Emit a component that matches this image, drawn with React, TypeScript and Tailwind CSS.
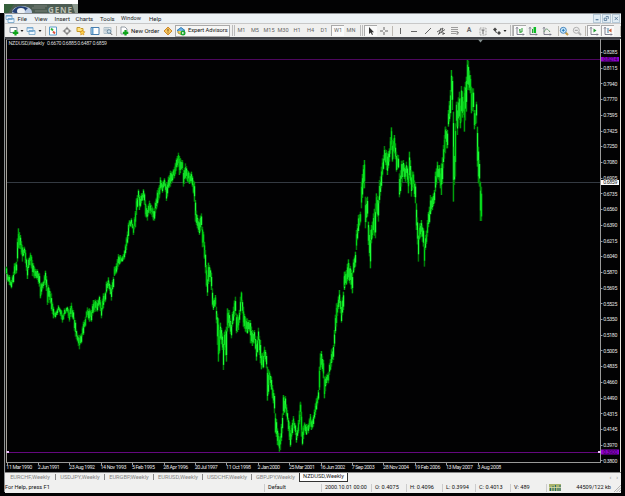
import type { ReactNode } from "react";

type Point = [number, number, number];
type Segment = { x: number; y: number; points: Point[] };

// Price ranges (position, high, low) in thirds of a pixel from each segment's origin.
const segments: Segment[] = [
  {
    x: 0,
    y: 150,
    points: [
      [19, 350, 372], [22, 370, 395], [27, 375, 405], [32, 390, 415], [38, 365, 400], [43, 340, 375], [48, 335, 370],
      [52, 265, 335], [55, 235, 295], [60, 255, 297], [66, 285, 335], [72, 290, 312], [76, 300, 340], [80, 345, 387],
      [85, 325, 360], [91, 308, 345], [97, 330, 378], [103, 350, 385], [110, 358, 390], [116, 370, 410], [121, 400, 445],
      [128, 392, 415], [133, 375, 405], [136, 362, 405], [142, 400, 465], [148, 415, 450], [153, 430, 482], [158, 470, 505],
      [164, 485, 505], [170, 475, 495], [175, 465, 482], [182, 480, 508], [187, 492, 518], [193, 475, 498], [200, 470, 488],
      [206, 480, 515], [212, 458, 500], [218, 480, 510], [224, 510, 560], [230, 550, 575], [236, 555, 598], [242, 550, 580],
      [248, 515, 555], [254, 500, 530], [260, 472, 500], [266, 475, 515], [272, 480, 515], [278, 450, 490], [284, 448, 485],
      [290, 450, 485], [298, 437, 470], [303, 465, 505], [308, 430, 475], [314, 425, 455], [319, 395, 430], [323, 382, 415],
      [328, 395, 422], [332, 405, 452], [338, 380, 415], [343, 350, 378], [348, 340, 370], [354, 312, 350], [360, 315, 340],
      [366, 318, 335], [372, 300, 328], [378, 262, 300], [384, 218, 268], [388, 210, 235], [394, 205, 230], [399, 225, 255],
      [404, 183, 232], [409, 145, 195], [413, 118, 150], [418, 135, 180], [424, 130, 160], [430, 117, 150], [436, 150, 200],
      [440, 175, 212], [447, 152, 190], [453, 165, 195], [460, 180, 212], [466, 155, 190], [472, 125, 160], [476, 108, 140],
    ],
  },
  {
    x: 150,
    y: 140,
    points: [
      [0, 190, 215], [5, 200, 230], [11, 205, 242], [16, 185, 215], [21, 150, 195], [26, 135, 175], [31, 112, 150],
      [36, 125, 158], [42, 115, 140], [49, 130, 183], [55, 110, 145], [60, 92, 140],
      [66, 95, 125], [72, 80, 115], [78, 55, 92], [83, 38, 80], [88, 48, 105], [95, 60, 90], [100, 90, 140], [106, 70, 118],
      [112, 90, 125], [118, 98, 132], [122, 95, 130], [127, 108, 140], [131, 125, 185], [135, 180, 245], [140, 225, 265],
      [146, 238, 285], [152, 220, 270], [156, 260, 322], [160, 275, 320], [164, 330, 400], [167, 375, 440], [170, 405, 468],
      [175, 368, 432], [180, 385, 425], [184, 398, 450], [187, 445, 500], [190, 475, 510], [194, 465, 500], [198, 500, 550],
      [203, 535, 665], [206, 570, 640], [211, 548, 600], [215, 580, 630], [219, 600, 690], [223, 575, 630], [227, 560, 665],
      [230, 505, 575], [236, 510, 565], [242, 545, 595], [248, 500, 550], [254, 470, 525], [259, 520, 580], [265, 530, 570],
      [270, 470, 525], [274, 455, 490], [278, 500, 560], [284, 530, 575], [290, 535, 582], [296, 540, 575], [300, 540, 610],
      [306, 570, 618], [312, 570, 610], [319, 600, 662], [324, 563, 610], [329, 600, 670], [334, 640, 688], [339, 635, 685],
      [343, 620, 660], [348, 640, 685], [352, 680, 782], [357, 692, 735], [362, 710, 750], [367, 735, 775], [372, 760, 820],
      [376, 820, 880], [382, 865, 915], [387, 890, 935], [391, 880, 930], [395, 820, 880], [400, 765, 825], [405, 768, 815],
      [411, 810, 845], [416, 845, 900], [420, 870, 920], [425, 840, 885], [429, 828, 865], [434, 850, 885], [439, 870, 908],
      [444, 840, 880], [449, 785, 840],
    ],
  },
  {
    x: 270,
    y: 280,
    points: [
      [90, 368, 405], [94, 395, 470], [97, 440, 496], [102, 427, 455], [108, 432, 465], [114, 430, 460], [119, 402, 440],
      [124, 420, 450], [129, 405, 440], [134, 370, 405], [139, 355, 390], [144, 330, 360], [148, 260, 330], [151, 220, 270],
      [154, 213, 262], [158, 240, 295], [163, 290, 355], [168, 283, 315], [173, 275, 310], [178, 250, 285], [183, 208, 260],
      [188, 195, 240], [192, 150, 200], [197, 70, 140], [201, 68, 108], [206, 30, 80], [210, 58, 100], [214, 65, 128],
      [218, 35, 90], [222, -10, 30],
    ],
  },
  {
    x: 330,
    y: 100,
    points: [
      [42, 515, 560], [47, 510, 555], [53, 478, 540], [58, 490, 550], [65, 515, 580], [70, 478, 520], [75, 455, 500],
      [79, 390, 450], [83, 345, 400], [89, 335, 370], [94, 245, 325], [98, 195, 265], [101, 180, 265], [106, 290, 385],
      [110, 290, 350], [115, 365, 435], [119, 390, 505], [124, 375, 430], [129, 340, 400], [134, 310, 415], [139, 280, 340],
      [143, 290, 365], [148, 240, 310], [153, 200, 265], [157, 175, 230], [162, 138, 185], [167, 150, 210], [171, 160, 225],
      [177, 145, 185], [182, 82, 150], [187, 120, 185], [193, 105, 160], [198, 155, 215], [203, 165, 205], [208, 220, 292],
      [214, 182, 260], [219, 180, 230], [225, 200, 245], [229, 185, 230], [234, 220, 280], [238, 155, 235], [243, 210, 290],
      [248, 215, 265], [254, 250, 310], [259, 310, 390], [263, 390, 485], [268, 370, 420], [273, 360, 410], [278, 385, 440],
      [282, 425, 500], [286, 405, 450], [291, 360, 410], [296, 320, 370], [301, 285, 345], [306, 290, 330], [311, 270, 310],
      [316, 215, 275], [321, 185, 235], [326, 195, 245], [331, 205, 265], [334, 190, 285], [339, 135, 205], [344, 80, 160],
      [349, 95, 145],
    ],
  },
  {
    x: 420,
    y: 40,
    points: [
      [74, 260, 315], [80, 270, 325], [85, 210, 260], [89, 150, 230], [93, 90, 180], [95, 110, 210], [98, 215, 485],
      [102, 320, 435], [105, 250, 410], [108, 185, 260], [112, 185, 285], [116, 155, 240], [120, 175, 265], [124, 138, 245],
      [129, 170, 225], [133, 140, 275], [137, 110, 215], [141, 60, 150], [144, 62, 150], [149, 105, 160], [154, 140, 220],
      [158, 145, 215], [163, 210, 268], [167, 205, 250], [169, 185, 250], [172, 260, 380], [175, 320, 430], [178, 360, 440],
      [181, 425, 543], [182, 440, 543],
    ],
  },
];

const noise = (n: number) => {
  const v = Math.sin(n * 91.7) * 4375.5;
  return v - Math.floor(v);
};

function priceBars() {
  const bars: ReactNode[] = [];
  segments.forEach((s, si) => {
    const first = Math.round(s.points[0][0] / 3);
    const last = Math.round(s.points[s.points.length - 1][0] / 3);
    for (let c = first; c <= last; c++) {
      const near = s.points.filter((p) => Math.round(p[0] / 3) === c);
      let hi: number;
      let lo: number;
      if (near.length) {
        hi = Math.min(...near.map((p) => p[1]));
        lo = Math.max(...near.map((p) => p[2]));
      } else {
        const i = Math.max(1, s.points.findIndex((p) => p[0] > c * 3));
        const a = s.points[i - 1];
        const b = s.points[i];
        const t = (c * 3 - a[0]) / (b[0] - a[0]);
        hi = a[1] + (b[1] - a[1]) * t + noise(c + s.x) * 5;
        lo = a[2] + (b[2] - a[2]) * t - noise(c * 2 + s.x) * 5;
      }
      const x = s.x + c;
      const top = s.y + hi / 3;
      const h = Math.max(4, (lo - hi) / 3);
      const bodyTop = top + h * (0.12 + 0.16 * noise(x));
      const bodyH = h * (0.5 + 0.2 * noise(x * 3));
      bars.push(
        <g key={si + "-" + c}>
          <rect x={x - 0.3} y={top} width="1.5" height={h} fill={noise(x * 5) > 0.5 ? "#007a08" : "#00a00c"} />
          <rect x={x - 0.1} y={bodyTop} width="1.3" height={bodyH} fill={noise(x * 7) > 0.3 ? "#1cff36" : "#00d816"} />
        </g>,
      );
    }
  });
  return bars;
}

const prices = [
  "0.8285", "0.8115", "0.7940", "0.7770", "0.7595", "0.7425", "0.7250", "0.7080", "0.6905", "0.6735", "0.6560", "0.6390",
  "0.6215", "0.6040", "0.5870", "0.5695", "0.5525", "0.5350", "0.5180", "0.5005", "0.4835", "0.4660", "0.4490", "0.4315",
  "0.4145", "0.3970", "0.3800",
];
const dates: [string, number][] = [
  ["11 Mar 1990", 26], ["2 Jun 1991", 22], ["23 Aug 1992", 26], ["14 Nov 1993", 26], ["5 Feb 1995", 23],
  ["28 Apr 1996", 25], ["20 Jul 1997", 23], ["11 Oct 1998", 25], ["2 Jan 2000", 22.5], ["25 Mar 2001", 26],
  ["16 Jun 2002", 25], ["7 Sep 2003", 23], ["28 Nov 2004", 26], ["19 Feb 2006", 26], ["13 May 2007", 27],
  ["3 Aug 2008", 24],
];

function Chart() {
  return (
    <svg
      viewBox="5 39 616 433"
      className="block h-[433px] w-[616px] shrink-0 bg-[#020203] font-[Roboto,sans-serif]"
    >
      <rect x="5" y="39" width="1" height="433" fill="#111" />
      <rect x="6" y="39" width="1" height="424" fill="#a6a29b" />
      <rect x="6" y="39" width="614" height="1" fill="#55565b" />
      <rect x="620" y="39" width="1" height="433" fill="#e8e8e0" />
      <rect x="7" y="59" width="594" height="1" fill="#4d075e" />
      <rect x="7" y="182" width="594" height="1" fill="#343a42" />
      <rect x="7" y="452" width="594" height="1" fill="#65087f" />
      <g>{priceBars()}</g>
      <rect x="600" y="39" width="1" height="424" fill="#999" />
      <rect x="7" y="462" width="594" height="1" fill="#999" />
      <path d="M478 39.5h5l-2.5 3z" fill="#85908f" />
      <text x="8.500" y="45" textLength="36" fill="#d8d8d8" fontSize="5.300">NZDUSD,Weekly</text>
      <text x="47" y="45" textLength="60" fill="#d8d8d8" fontSize="5.300">0.6670 0.6885 0.6487 0.6859</text>
      {prices.map((p, i) => (
        <g key={p}>
          <rect x="601" y={Math.round(52 + i * 15.71)} width="1.5" height="1" fill="#999" />
          <text x="603.3" y={54.2 + i * 15.71} textLength="14" fill="#e4e4e4" fontSize="5.200">
            {p}
          </text>
        </g>
      ))}
      {dates.map(([d, w], i) => (
        <g key={d}>
          <rect x={Math.round(6.5 + i * 31.4)} y="463" width="1" height="2" fill="#999" />
          <text x={6.3 + i * 31.4} y="468.6" textLength={w} fill="#e4e4e4" fontSize="5.300">
            {d}
          </text>
        </g>
      ))}
      <rect x="601" y="57" width="18" height="4.5" fill="#9000ce" />
      <text x="603.3" y="61.2" textLength="14" fill="#2a0040" fontSize="5.200">0.8214</text>
      <rect x="601" y="180" width="18" height="5" fill="#fff" />
      <text x="603.3" y="184.4" textLength="14" fill="#111" fontSize="5.200">0.6859</text>
      <rect x="601" y="449.5" width="18" height="5" fill="#9000ce" />
      <text x="603.3" y="454" textLength="14" fill="#2a0040" fontSize="5.200">0.3900</text>
      <rect x="6.5" y="451" width="2.5" height="2" fill="#efc5ff" />
      <rect x="598" y="451" width="2.5" height="2" fill="#efc5ff" />
    </svg>
  );
}

function Cell({ w, on, children }: { w: string; on?: boolean; children?: ReactNode }) {
  return (
    <div
      className={
        "flex h-[11px] shrink-0 items-center justify-center " +
        w +
        (on ? " border-t border-l border-[#aaa] bg-[#fafafa]" : "")
      }
    >
      {children}
    </div>
  );
}

const Svg = ({ children }: { children: ReactNode }) => (
  <svg viewBox="0 0 10 10" className="h-[10px] w-[10px] shrink-0" fill="none" stroke="#666" strokeWidth="1">
    {children}
  </svg>
);
const Caret = () => (
  <svg viewBox="0 0 4 4" className="h-1 w-1 shrink-0">
    <path d="M.5 1h3l-1.5 2z" fill="#222" />
  </svg>
);
const Sep = () => <div className="h-[10px] w-px shrink-0 bg-[#bdb9b2]" />;
const Grip = () => <div className="h-[11px] w-[3px] shrink-0 border-x border-[#bbb]" />;
const Plus = () => <path d="M6.5 4v5.5M3.8 6.8h5.5" stroke="#0fa51b" strokeWidth="2.2" />;
const Axes = () => <path d="M2 1v7.5h7M1 2.5l1-1 1 1M8 7.5l1 1-1 1" stroke="#667" strokeWidth=".8" />;

const Windows = () => (
  <Svg>
    <path d="M1 1.500h6v4H1zM3 4.500h6v4H3z" fill="#eef7ff" stroke="#6c9fc4" strokeWidth=".8" />
    <path d="M1 2h6M3 5h6" stroke="#6aa3d0" />
  </Svg>
);

function Toolbar() {
  return (
    <div className="flex h-[14px] shrink-0 items-center overflow-hidden border-t border-[#c8c8c8] bg-[#f0f0ef] pl-[3px] text-[5.600px] text-[#666]">
      <Cell w="w-[11px]">
        <Svg>
          <path d="M1 1.5h7v5H1z" fill="#fff" stroke="#789" />
          <Plus />
        </Svg>
      </Cell>
      <Cell w="w-[5px]"><Caret /></Cell>
      <Cell w="w-[14px]"><Windows /></Cell>
      <Cell w="w-[4px]"><Caret /></Cell>
      <div className="w-[3px] shrink-0" />
      <Sep />
      <Cell w="w-[14px]">
        <Svg>
          <path d="M1.5 1h7v8h-7z" fill="#fff" stroke="#5d9cc9" />
          <path d="M3 2.5l2 2" stroke="#2db33b" strokeWidth="1.8" />
          <path d="M5 5.5l2 2" stroke="#dc4f3b" strokeWidth="1.8" />
        </Svg>
      </Cell>
      <Cell w="w-[14px]">
        <Svg>
          <circle cx="5" cy="5" r="2.5" stroke="#777" />
          <path d="M5 .8v3M5 6.2v3M.8 5h3M6.2 5h3" stroke="#777" />
        </Svg>
      </Cell>
      <Cell w="w-[14px]">
        <Svg>
          <path d="M1 1.5h3l1 1h2v3H1z" fill="#ffe17c" stroke="#c69b2b" />
          <path d="M6.3 4l.8 1.6 1.8.2-1.3 1.3.3 1.8-1.6-.9-1.6.9.3-1.8L3.700 5.800l1.800-.2z" fill="#ffd44a" stroke="#d28d18" strokeWidth=".7" />
        </Svg>
      </Cell>
      <Cell w="w-[13px]">
        <Svg>
          <path d="M1 1.500h8v7H1z" fill="#fff" stroke="#477fb0" />
          <path d="M2.500 2v6" stroke="#65a1cf" strokeWidth="2" />
        </Svg>
      </Cell>
      <Cell w="w-[14px]">
        <Svg>
          <path d="M1 1.500h7v6H1zM3 1.500v6M5 1.500v6M1 4h7" stroke="#9ab0bf" strokeWidth=".7" />
          <circle cx="6" cy="5.500" r="1.800" fill="#cfe1ec" stroke="#6989a0" />
          <path d="M7.300 7l2 2" />
        </Svg>
      </Cell>
      <div className="w-[1px] shrink-0" />
      <Sep />
      <Cell w="w-[14px]">
        <Svg>
          <path d="M2 1h4l2 2v5H2z" fill="#fff" stroke="#7b8790" strokeWidth=".8" />
          <Plus />
        </Svg>
      </Cell>
      <span className="w-[31px] shrink-0 whitespace-nowrap text-[6px] text-[#111]">New Order</span>
      <Cell w="w-[12px]">
        <Svg>
          <path d="M5 1l4 4-4 4-4-4z" fill="#f6c65b" stroke="#d18a2b" />
          <path d="M5 2.800v2.700M5 6.500v.8" stroke="#7e4d16" />
        </Svg>
      </Cell>
      <div className="ml-[1px] flex h-[12px] w-[55px] shrink-0 items-center border border-[#aaa] bg-[#f7f7f6]">
        <Svg>
          <path d="M1 4.500l4-3 4 3-4 2z" fill="#68b1e5" stroke="#2d7ab4" />
          <path d="M2 5v2l3 1.500L8 7V5" fill="#f4d15d" stroke="#a99843" />
          <circle cx="7" cy="7" r="2.500" fill="#16a72c" stroke="none" />
          <path d="M6.200 5.700v2.600L8.300 7z" fill="#fff" stroke="none" />
        </Svg>
        <span className="ml-[2px] whitespace-nowrap text-[5.700px] text-[#111]">Expert Advisors</span>
      </div>
      <div className="w-[2px] shrink-0" />
      <Grip />
      <Cell w="w-[13px]">M1</Cell>
      <Cell w="w-[14px]">M5</Cell>
      <Cell w="w-[14px]">M15</Cell>
      <Cell w="w-[14px]">M30</Cell>
      <Cell w="w-[14px]">H1</Cell>
      <Cell w="w-[13px]">H4</Cell>
      <Cell w="w-[14px]">D1</Cell>
      <Cell w="w-[13px]" on>W1</Cell>
      <Cell w="w-[14px]">MN</Cell>
      <div className="w-[2px] shrink-0" />
      <Grip />
      <div className="w-px shrink-0" />
      <Cell w="w-[13px]" on>
        <Svg>
          <path d="M3 1v7l1.700-1.500L6 9l1-.5-1.200-2.300H8z" fill="#333" stroke="none" />
        </Svg>
      </Cell>
      <Cell w="w-[14px]">
        <Svg><path d="M5 1v3M5 6v3M1 5h3M6 5h3" /></Svg>
      </Cell>
      <div className="w-px shrink-0" />
      <Sep />
      <Cell w="w-[14px]"><Svg><path d="M5.500 2v6" /></Svg></Cell>
      <Cell w="w-[14px]"><Svg><path d="M2 5.500h6" /></Svg></Cell>
      <Cell w="w-[13px]"><Svg><path d="M2 8l6-6" /></Svg></Cell>
      <Cell w="w-[14px]">
        <Svg><path d="M1 6l6-4M2 8.500l7-5M3 8l2-6M5.500 7L7 2M7 7.500h2M7 6v3" stroke="#555" strokeWidth=".9" /></Svg>
      </Cell>
      <Cell w="w-[14px]">
        <Svg><path d="M1 1.500h7M1 3.500h7M1 5.500h7M1 7.500h5M7 9V6.500h2M7 7.700h1.500" stroke="#777" strokeWidth=".7" /></Svg>
      </Cell>
      <Cell w="w-[14px]"><span className="text-[7px] font-bold">A</span></Cell>
      <Cell w="w-[14px]">
        <Svg>
          <path d="M2 2h6v7H2z" stroke="#888" strokeWidth=".7" strokeDasharray="1 .5" />
          <path d="M3.500 4h3M5 4v4" />
        </Svg>
      </Cell>
      <Cell w="w-[13px]">
        <Svg>
          <path d="M1 3.500l2-2 2 2-2 2zM5 7l2-2 2 2-2 2z" fill="#444" stroke="none" />
          <path d="M3 4l1.500 3" stroke="#444" />
        </Svg>
      </Cell>
      <Cell w="w-[4px]"><Caret /></Cell>
      <div className="w-[3px] shrink-0" />
      <Grip />
      <Cell w="w-[13px]" on>
        <Svg><Axes /><path d="M5 3v4M5 4H4M5 6h2M7 2v4" stroke="#239b2d" /></Svg>
      </Cell>
      <Cell w="w-[14px]">
        <Svg><Axes /><path d="M4.500 3v4" stroke="#27a434" /><path d="M6.800 1v6" stroke="#0cbd25" strokeWidth="2.500" /></Svg>
      </Cell>
      <Cell w="w-[13px]">
        <Svg><Axes /><path d="M2 6c2-4 3-4 6 0" stroke="#6d9d73" /></Svg>
      </Cell>
      <div className="w-[5px] shrink-0" />
      <Sep />
      <Cell w="w-[10px]">
        <Svg>
          <path d="M6.500 6.500L9 9" stroke="#c59b49" strokeWidth="2" />
          <circle cx="4.300" cy="4.300" r="3" fill="#d5efff" stroke="#4586bd" />
          <path d="M2.800 4.300h3M4.300 2.800v3" stroke="#2378ba" />
        </Svg>
      </Cell>
      <Cell w="w-[16px]">
        <Svg>
          <path d="M6.500 6.500L9 9" stroke="#b5b5b5" strokeWidth="2" />
          <circle cx="4.300" cy="4.300" r="3" fill="#eee" stroke="#b0b0b0" />
          <path d="M2.800 4.300h3" stroke="#999" />
        </Svg>
      </Cell>
      <Sep />
      <div className="w-px shrink-0" />
      <Cell w="w-[13px]" on>
        <Svg><Axes /><path d="M4.500 2.500v4l3-2z" fill="#209c31" stroke="none" /></Svg>
      </Cell>
      <div className="w-px shrink-0" />
      <Cell w="w-[13px]" on>
        <Svg><Axes /><path d="M5 2v5" stroke="#4281a3" /><path d="M8.500 2.500v4l-3-2z" fill="#cc5a32" stroke="none" /></Svg>
      </Cell>
      <div className="ml-auto" />
      <Sep />
    </div>
  );
}

function MenuBar() {
  return (
    <div className="flex h-[9px] shrink-0 items-center bg-[#edf2f5] text-[6px] text-[#222]">
      <div className="w-[12.500px] shrink-0"><Windows /></div>
      <span className="w-[17px] shrink-0">File</span>
      <span className="w-[20px] shrink-0">View</span>
      <span className="w-[21px] shrink-0">Insert</span>
      <span className="w-[24.500px] shrink-0">Charts</span>
      <span className="w-[21px] shrink-0">Tools</span>
      <span className="w-[28px] shrink-0 text-[5.600px]">Window</span>
      <span>Help</span>
      <div className="ml-auto flex gap-px pr-px text-[#4d7191]">
        <div className="h-[9px] w-[8.500px] border border-[#b6c9d7] bg-[#e1edf5]">
          <svg viewBox="0 0 8 8" className="h-full w-full"><path d="M2 5.500h3.500" stroke="currentColor" strokeWidth="1.400" /></svg>
        </div>
        <div className="h-[9px] w-[8.500px] border border-[#b6c9d7] bg-[#e1edf5]">
          <svg viewBox="0 0 8 8" className="h-full w-full" fill="none"><path d="M3.500 1.500h3v3M1.500 3.500h3v3h-3z" stroke="currentColor" /></svg>
        </div>
        <div className="h-[9px] w-[8.500px] border border-[#b6c9d7] bg-[#e1edf5]">
          <svg viewBox="0 0 8 8" className="h-full w-full"><path d="M2 2l4 4M6 2L2 6" stroke="currentColor" /></svg>
        </div>
      </div>
    </div>
  );
}

function Tabs() {
  const cell = "flex h-[9px] shrink-0 items-center justify-center";
  const bar = "mt-px h-[6px] w-px shrink-0 bg-[#888]";
  return (
    <div className="flex h-[10px] shrink-0 items-start border-t border-[#888] bg-[#f0f0ef] text-[5.700px] text-[#858585]">
      <div className={cell + " w-[50px]"}>EURCHF,Weekly</div>
      <div className={bar} />
      <div className={cell + " w-[48px]"}>USDJPY,Weekly</div>
      <div className={bar} />
      <div className={cell + " w-[48px]"}>EURGBP,Weekly</div>
      <div className={bar} />
      <div className={cell + " w-[48px]"}>EURUSD,Weekly</div>
      <div className={bar} />
      <div className={cell + " w-[48px]"}>USDCHF,Weekly</div>
      <div className={bar} />
      <div className={cell + " w-[47px]"}>GBPJPY,Weekly</div>
      <div className={cell + " w-[49px] border-x border-b border-[#333] bg-white text-[#222]"}>NZDUSD,Weekly</div>
      <div className="ml-auto flex gap-[5px] pr-[3px] text-[6px] leading-[8px]">
        <span>‹</span>
        <span>›</span>
      </div>
    </div>
  );
}

function StatusBar() {
  const cell = "flex h-[8px] shrink-0 items-center border-l border-[#ccc] pl-[3px]";
  return (
    <div className="flex h-[11px] shrink-0 items-center bg-[#f0f0ef] text-[5.600px] text-[#111]">
      <span className="w-[259px] shrink-0">For Help, press F1</span>
      <div className={cell + " w-[57px]"}>Default</div>
      <div className={cell + " w-[50px] text-[5.400px] whitespace-nowrap"}>2000.10.01 00:00</div>
      <div className={cell + " w-[35px]"}>O: 0.4075</div>
      <div className={cell + " w-[36px]"}>H: 0.4096</div>
      <div className={cell + " w-[33px]"}>L: 0.3994</div>
      <div className={cell + " w-[35px]"}>C: 0.4013</div>
      <div className={cell + " w-[36px]"}>V: 489</div>
      <div className="flex h-[8px] flex-1 items-center border-l border-[#ccc] pl-[2px]">
        <svg viewBox="0 0 12 7" className="h-[7px] w-[12px]">
          <rect width="12" height="7" fill="#a8b36c" />
          <path d="M1.500 3v4M4 2v5M6.500 1v6M9 3v4M11 1v6" stroke="#286a76" />
          <path d="M0 3.500h12" stroke="#dee0ae" strokeWidth=".8" />
        </svg>
        <span className="ml-auto pr-[11px] whitespace-nowrap">44509/122 kb</span>
        <svg viewBox="0 0 8 8" className="-ml-[9px] h-2 w-2 shrink-0">
          <path d="M1 8l7-7M3.500 8L8 3.500M6 8l2-2" stroke="#999" strokeWidth=".7" />
        </svg>
      </div>
    </div>
  );
}

function Banner() {
  return (
    <div className="flex h-[13px] w-[78px] flex-col bg-white pt-1 pl-1">
      <svg viewBox="0 0 74 9" className="h-[9px] w-[74px] bg-[#4c5c52] font-['Noto_Sans',sans-serif]">
        <path d="M0 0h10L4 9H0z" fill="#355f3b" />
        <ellipse cx="18" cy="8" rx="10" ry="6" fill="#b8c9e2" />
        <path d="M8 8q5-9 16-4l-5 5h-8z" fill="#233f75" />
        <ellipse cx="17" cy="7" rx="4" ry="3" fill="#edf1f5" />
        <path d="M30 2h13M28 4h13M31 7h12" stroke="#798079" />
        <text x="44" y="9" textLength="24" fill="#b9bdb0" fontSize="8" fontWeight="bold">GENE</text>
        <path d="M68 0h6v9h-3z" fill="#8d9a8f" />
      </svg>
    </div>
  );
}

export default function App() {
  return (
    <div className="h-[496px] w-[625px] overflow-hidden bg-[#020203] font-[Roboto,sans-serif] leading-none">
      <Banner />
      <div className="ml-1 flex h-[479px] w-[617px] flex-col border-t border-l border-[#8f9294]">
        <MenuBar />
        <Toolbar />
        <div className="h-[2px] shrink-0 bg-[#44464b]" />
        <Chart />
        <Tabs />
        <StatusBar />
      </div>
    </div>
  );
}
